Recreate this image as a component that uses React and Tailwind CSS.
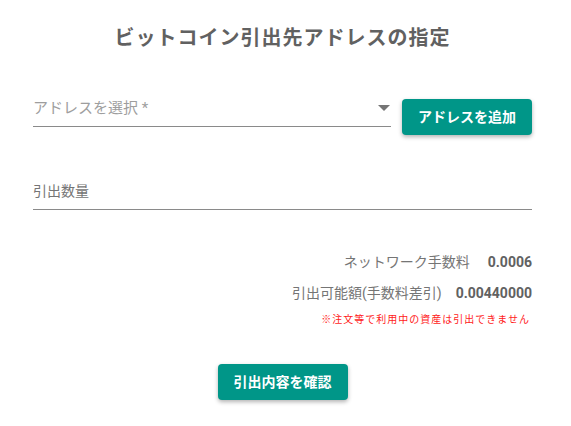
import React from "react";

const font = { fontFamily: "Roboto, 'Noto Sans CJK JP', sans-serif" };

const WithdrawAddress = () => {
  return (
    <div className="min-h-screen bg-white" style={font}>
      <div className="w-[499px] ml-[33px] pt-[22px]">
        <h1 className="text-center text-[20px] font-bold tracking-[1px] text-[#616161] leading-[32px]">
          ビットコイン引出先アドレスの指定
        </h1>

        <div className="flex items-end mt-[38px]">
          <div className="flex-1 border-b border-[#8a8a8a] h-[35px] flex items-center justify-between pb-[2px]">
            <span className="text-[15px] text-[#9e9e9e]">アドレスを選択 *</span>
            <svg width="12" height="6" viewBox="0 0 12 6" className="mr-[1px]">
              <path d="M0 0h12L6 6z" fill="#757575" />
            </svg>
          </div>
          <button className="ml-[11px] mb-[-8px] w-[130px] h-[36px] rounded-[4px] bg-[#009688] text-white text-[14px] font-bold shadow-[0_2px_4px_rgba(0,0,0,0.3)]">
            アドレスを追加
          </button>
        </div>

        <div className="mt-[48px] border-b border-[#8a8a8a] h-[35px] flex items-center pb-[2px]">
          <span className="text-[14px] text-[#757575]">引出数量</span>
        </div>

        <div className="mt-[41px] flex flex-col items-end">
          <div className="flex items-center h-[22px]">
            <span className="text-[14px] text-[#757575]">ネットワーク手数料</span>
            <span className="ml-[18px] text-[14px] font-bold text-[#616161]">0.0006</span>
          </div>
          <div className="flex items-center h-[22px] mt-[9px]">
            <span className="text-[14px] text-[#757575]">引出可能額(手数料差引)</span>
            <span className="ml-[14px] text-[14px] font-bold text-[#616161]">0.00440000</span>
          </div>
          <div className="mt-[8px] mr-[2px] text-[10px] tracking-[1px] text-[#ff1a1a]">
            ※注文等で利用中の資産は引出できません
          </div>
        </div>

        <div className="flex justify-center mt-[37px]">
          <button className="w-[130px] h-[36px] rounded-[4px] bg-[#009688] text-white text-[14px] font-bold shadow-[0_2px_4px_rgba(0,0,0,0.3)]">
            引出内容を確認
          </button>
        </div>
      </div>
    </div>
  );
};

export default WithdrawAddress;
